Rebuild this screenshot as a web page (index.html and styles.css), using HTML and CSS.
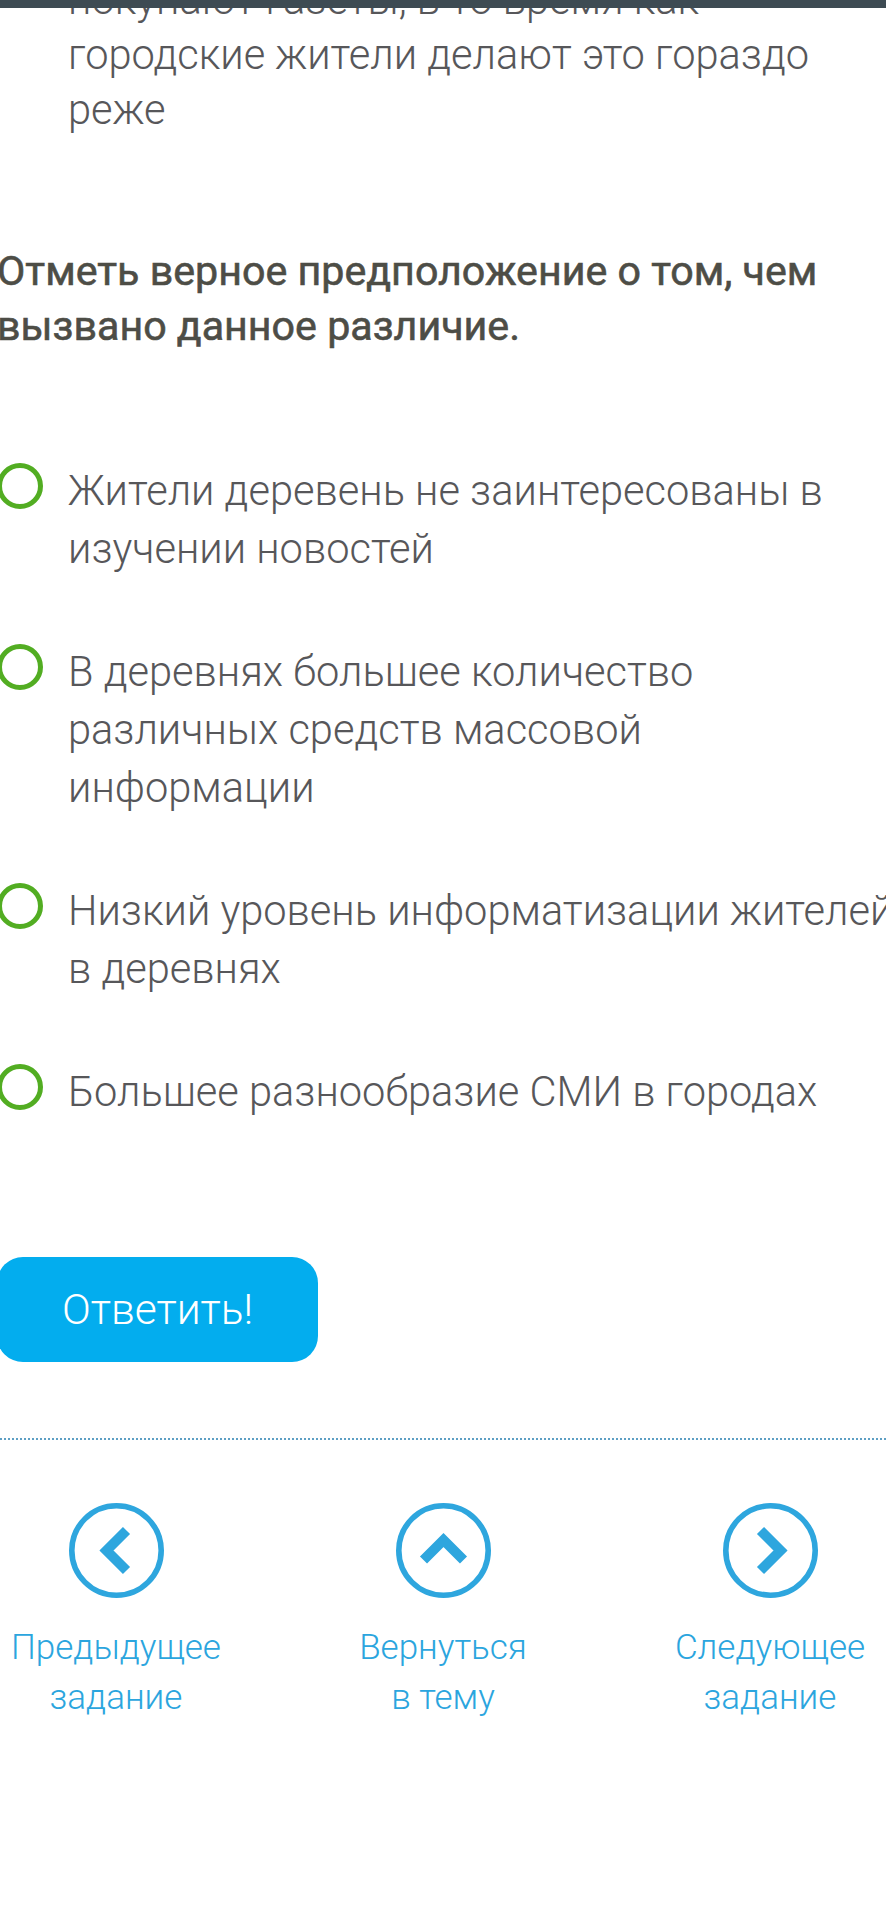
FILE: index.html
```html
<!DOCTYPE html>
<html lang="ru">
<head>
<meta charset="utf-8">
<title>Задание</title>
<link rel="stylesheet" href="styles.css">
</head>
<body>
<div class="topbar"></div>
<main class="page">
  <p class="quote">покупают газеты, в то время как<br>городские жители делают это гораздо<br>реже</p>

  <h2 class="question">Отметь верное предположение о том, чем<br>вызвано данное различие.</h2>

  <ul class="options">
    <li class="option"><span class="radio"></span><span class="label">Жители деревень не заинтересованы в<br>изучении новостей</span></li>
    <li class="option"><span class="radio"></span><span class="label">В деревнях большее количество<br>различных средств массовой<br>информации</span></li>
    <li class="option"><span class="radio"></span><span class="label">Низкий уровень информатизации жителей<br>в деревнях</span></li>
    <li class="option"><span class="radio"></span><span class="label">Большее разнообразие СМИ в городах</span></li>
  </ul>

  <button class="submit" type="button">Ответить!</button>
</main>

<hr class="divider">

<nav class="pager">
  <a class="pager-item" href="#">
    <svg class="pager-icon" width="95" height="95" viewBox="0 0 95 95">
      <circle cx="47.5" cy="47.5" r="44.7" fill="none" stroke="currentColor" stroke-width="5.6"/>
      <polyline points="57.5,27.5 37.5,47.5 57.5,67.5" fill="none" stroke="currentColor" stroke-width="10"/>
    </svg>
    <span class="pager-text">Предыдущее<br>задание</span>
  </a>
  <a class="pager-item" href="#">
    <svg class="pager-icon" width="95" height="95" viewBox="0 0 95 95">
      <circle cx="47.5" cy="47.5" r="44.7" fill="none" stroke="currentColor" stroke-width="5.6"/>
      <polyline points="27.5,57 47.5,37 67.5,57" fill="none" stroke="currentColor" stroke-width="10"/>
    </svg>
    <span class="pager-text">Вернуться<br>в тему</span>
  </a>
  <a class="pager-item" href="#">
    <svg class="pager-icon" width="95" height="95" viewBox="0 0 95 95">
      <circle cx="47.5" cy="47.5" r="44.7" fill="none" stroke="currentColor" stroke-width="5.6"/>
      <polyline points="37.5,27.5 57.5,47.5 37.5,67.5" fill="none" stroke="currentColor" stroke-width="10"/>
    </svg>
    <span class="pager-text">Следующее<br>задание</span>
  </a>
</nav>
</body>
</html>
```

FILE: styles.css
```css
html, body {
  margin: 0;
  padding: 0;
  overflow-x: hidden;
  background: #ffffff;
}

body {
  font-family: Roboto, "Noto Sans", "Liberation Sans", sans-serif;
  font-size: 41.6px;
  line-height: 55px;
  color: #57575a;
}

/* bottom edge of the sticky site header */
.topbar {
  position: fixed;
  top: 0;
  left: 0;
  right: 0;
  height: 8px;
  background: #3e4b53;
  z-index: 5;
}

.page {
  margin-left: -3px;
  width: 920px;
}

.quote {
  margin: -28px 0 0 71px;
  font-weight: 300;
  white-space: nowrap;
}

/* medium-weight question text */
.question {
  margin: 107px 0 0 0;
  font-size: 41.2px;
  line-height: 55px;
  font-weight: 400;
  -webkit-text-stroke: 0.6px #4d4d46;
  color: #4d4d46;
  white-space: nowrap;
}

.options {
  list-style: none;
  margin: 108px 0 0 0;
  padding: 0;
  display: flex;
  flex-direction: column;
  gap: 65px;
}

.option {
  display: flex;
  align-items: flex-start;
  gap: 25px;
  line-height: 58px;
  font-weight: 300;
  white-space: nowrap;
}

.radio {
  flex: 0 0 auto;
  box-sizing: border-box;
  width: 46px;
  height: 46px;
  margin-top: 1px;
  border: 5px solid #52ad22;
  border-radius: 50%;
  background: #ffffff;
}

.submit {
  display: block;
  margin: 136px 0 0 0;
  width: 321px;
  height: 105px;
  border: 0;
  border-radius: 26px;
  background: #03adee;
  color: #ffffff;
  font-family: Roboto, "Noto Sans", "Liberation Sans", sans-serif;
  font-size: 42.5px;
  font-weight: 300;
  padding: 0;
}

.divider {
  margin: 76px 0 0 0;
  border: 0;
  border-top: 2px dotted #5d9fc4;
  height: 0;
}

.pager {
  display: flex;
  justify-content: center;
  gap: 107px;
  margin-top: 63px;
}

.pager-item {
  flex: 0 0 220px;
  display: flex;
  flex-direction: column;
  align-items: center;
  text-decoration: none;
  color: #2ba5de;
}

.pager-icon {
  display: block;
  color: #2ea6de;
}

.pager-text {
  margin-top: 25px;
  font-size: 35px;
  line-height: 50px;
  font-weight: 300;
  text-align: center;
  white-space: nowrap;
}
```
